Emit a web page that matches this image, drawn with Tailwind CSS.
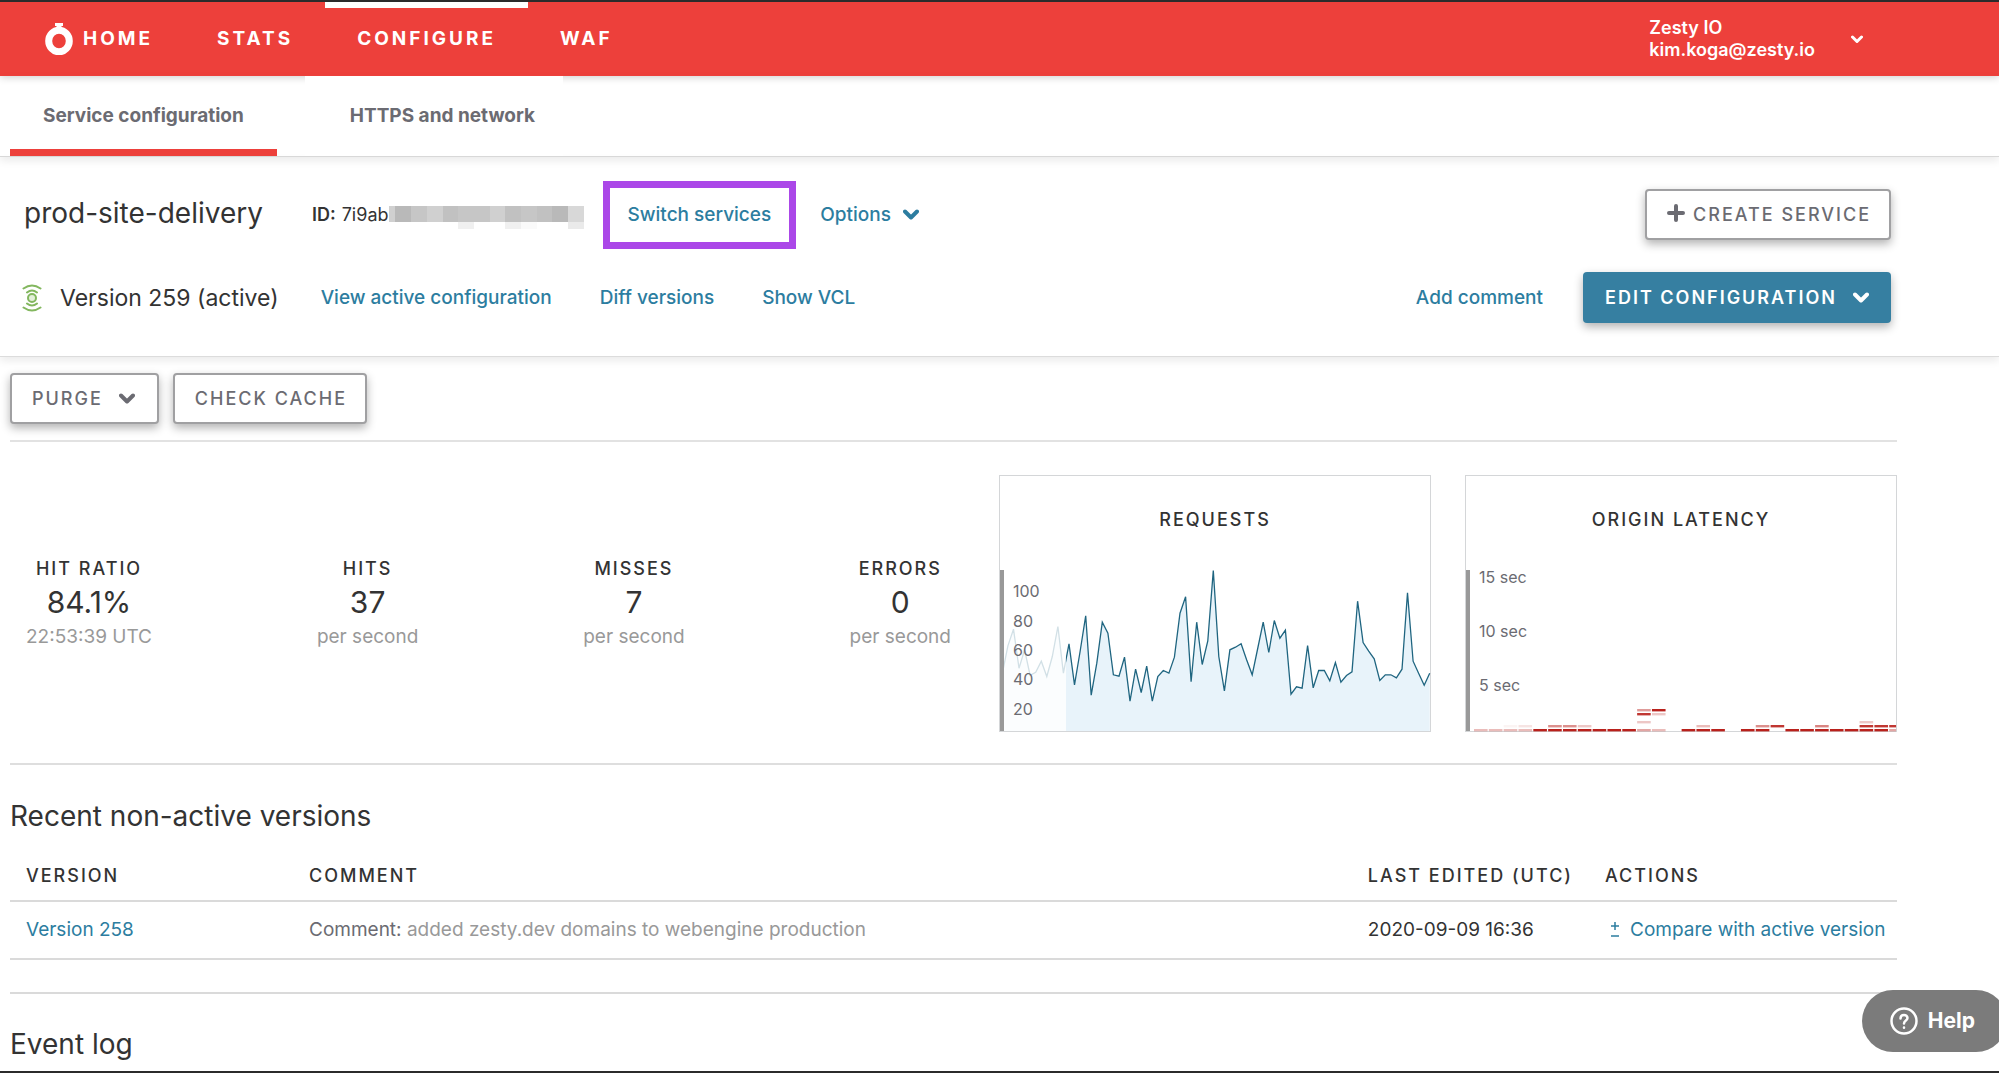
<!DOCTYPE html>
<html lang="en">
<head>
    <meta charset="UTF-8" />
    <meta name="viewport" content="width=device-width, initial-scale=1.0" />
    <title>prod-site-delivery - Configure</title>
    <script src="https://cdn.jsdelivr.net/npm/@tailwindcss/browser@4"></script>
</head>
<body class="min-h-screen bg-white border-t-2 border-b-2 border-[#2b2b2b] font-['Inter',sans-serif] text-[19px] leading-6 text-[#333] overflow-x-hidden">

<!-- Top navigation -->
<header class="relative z-10 flex h-[74px] items-stretch bg-[#ed403b] text-white shadow-[0_1px_8px_rgba(0,0,0,0.2)]">
    <nav class="flex font-bold tracking-[3px]">
        <a href="#" class="flex items-center gap-[10px] pl-[45px] pr-[32px]">
            <svg class="h-8 w-7" viewBox="0 0 28 32" fill="none">
                <path d="M10 0h8v3h-1.5v4h-5V3H10z" fill="#fff" />
                <ellipse cx="14" cy="18" rx="10.3" ry="10.8" stroke="#fff" stroke-width="7" />
            </svg>
            HOME
        </a>
        <a href="#" class="flex items-center px-8">STATS</a>
        <a href="#" class="flex items-center border-t-[6px] border-white px-8 pb-[6px]">CONFIGURE</a>
        <a href="#" class="flex items-center px-8">WAF</a>
    </nav>
    <button class="ml-auto mr-[136px] flex items-center gap-9 text-left font-semibold text-[18px] leading-[22px]">
        <span>Zesty IO<br />kim.koga@zesty.io</span>
        <svg class="h-3 w-3" viewBox="0 0 12 12" fill="none" stroke="#fff" stroke-width="3" stroke-linecap="round" stroke-linejoin="round"><path d="M1.5 4L6 8.5 10.5 4" /></svg>
    </button>
</header>

<!-- Tabs -->
<nav class="relative z-20 -mt-px flex h-[82px] border-b border-[#d8d8d8] pl-[10px] pt-px font-bold text-[#6b6b72] shadow-[0_4px_8px_rgba(0,0,0,0.08)]">
    <a href="#" class="flex items-center border-b-[7px] border-[#ed403b] px-[33px] pt-[6px]">Service configuration</a>
    <a href="#" class="ml-7 flex items-center bg-white pl-[45px] pr-7">HTTPS and network</a>
</nav>

<!-- Service header -->
<section class="flex h-[200px] flex-col gap-8 border-b border-[#dcdcdc] pl-[22px] pr-[108px] pt-8 font-medium text-[#2c7da0] shadow-[0_4px_8px_rgba(0,0,0,0.08)]">
    <div class="flex h-[51px] items-center">
        <h1 class="pb-1 pl-[2px] text-[28px] font-normal text-[#333]">prod-site-delivery</h1>
        <p class="ml-[49px] flex items-center text-[18px] font-normal text-[#333]">
            <b class="mr-[6px] font-semibold">ID:</b>7i9ab
            <svg class="h-7 w-[195px]" viewBox="0 0 195 28" shape-rendering="crispEdges">
                <path d="M0 5h6v16H0z" fill="#d0d0d0" />
                <path d="M6 5h16v16H6zM163 5h16v16h-16z" fill="#b9b9b9" />
                <path d="M22 5h16v16H22zM69 5h32v16H69zM132 5h16v16h-16z" fill="#c6c6c6" />
                <path d="M38 5h16v16H38zM101 5h15v16h-15z" fill="#d0d0d0" />
                <path d="M54 5h15v16H54zM116 5h16v16h-16zM148 5h15v16h-15z" fill="#c1c1c1" />
                <path d="M179 5h16v16h-16z" fill="#d8d8d8" />
                <path d="M69 21h16v7H69zM116 21h16v7h-16z" fill="#f0f0f0" />
                <path d="M132 21h16v7h-16z" fill="#fafafa" />
                <path d="M179 21h16v7h-16z" fill="#eaeaea" />
            </svg>
        </p>
        <a href="#" class="ml-[19px] flex h-[68px] shrink-0 items-center border-[7px] border-[#ab47e8] px-[18px]">Switch services</a>
        <button class="ml-6 flex items-center gap-3">
            Options
            <svg class="h-4 w-4" viewBox="0 0 16 16" fill="none" stroke="currentColor" stroke-width="4" stroke-linecap="round" stroke-linejoin="round"><path d="M2 4.5L8 10.5 14 4.5" /></svg>
        </button>
        <button class="ml-auto flex h-[51px] items-center gap-2 rounded-[4px] border-2 border-[#a0a0a2] bg-white pl-5 pr-[18px] text-[18px] tracking-[2px] text-[#6b6b72] shadow-[0_4px_10px_rgba(0,0,0,0.3)]">
            <svg class="h-[18px] w-[18px] -mt-1" viewBox="0 0 18 18" stroke="currentColor" stroke-width="4" stroke-linecap="round"><path d="M9 2v14M2 9h14" /></svg>
            CREATE SERVICE
        </button>
    </div>
    <div class="flex h-[51px] items-center">
        <svg class="h-7 w-5" viewBox="0 0 20 28" fill="none" stroke="#83b75f" stroke-width="2" stroke-linecap="round">
            <circle cx="10" cy="14" r="4" fill="#e3efdb" />
            <path d="M5 8.5Q10 4.5 15 8.5M1.5 4.5Q10-1.5 18.5 4.5M5 19.5Q10 23.5 15 19.5M1.5 23.5Q10 29.5 18.5 23.5" />
        </svg>
        <h2 class="ml-[18px] text-[23px] font-normal text-[#333]">Version 259 (active)</h2>
        <a href="#" class="ml-[42px]">View active configuration</a>
        <a href="#" class="ml-12">Diff versions</a>
        <a href="#" class="ml-12">Show VCL</a>
        <a href="#" class="ml-auto">Add comment</a>
        <button class="ml-10 flex h-[51px] items-center gap-4 rounded-[4px] bg-[#367fa1] px-[22px] text-[18px] font-semibold tracking-[2px] text-white shadow-[0_4px_10px_rgba(0,0,0,0.3)]">
            EDIT CONFIGURATION
            <svg class="h-4 w-4" viewBox="0 0 16 16" fill="none" stroke="currentColor" stroke-width="4" stroke-linecap="round" stroke-linejoin="round"><path d="M2 4.5L8 10.5 14 4.5" /></svg>
        </button>
    </div>
</section>

<main class="pl-[10px] pr-[102px] pt-4">
    <div class="flex gap-[14px] border-b-2 border-[#e2e2e2] pb-4 text-[18px] font-medium tracking-[2px] text-[#6b6b72]">
        <button class="flex h-[51px] items-center gap-4 rounded-[4px] border-2 border-[#a0a0a2] bg-white pl-5 pr-[22px] shadow-[0_4px_10px_rgba(0,0,0,0.3)]">
            PURGE
            <svg class="h-4 w-4" viewBox="0 0 16 16" fill="none" stroke="currentColor" stroke-width="4" stroke-linecap="round" stroke-linejoin="round"><path d="M2 4.5L8 10.5 14 4.5" /></svg>
        </button>
        <button class="flex h-[51px] items-center rounded-[4px] border-2 border-[#a0a0a2] bg-white pl-5 pr-[18px] shadow-[0_4px_10px_rgba(0,0,0,0.3)]">CHECK CACHE</button>
    </div>

    <!-- Live stats -->
    <section class="flex border-b-2 border-[#dedede] pb-[31px] pt-[33px]">
        <div class="flex grow items-center justify-between pl-4 pr-12 text-center">
            <div>
                <h3 class="text-[18px] font-medium tracking-[2px]">HIT RATIO</h3>
                <p class="text-[30px] leading-[42px]">84.1%</p>
                <p class="leading-7 text-[#999]">22:53:39 UTC</p>
            </div>
            <div>
                <h3 class="text-[18px] font-medium tracking-[2px]">HITS</h3>
                <p class="text-[30px] leading-[42px]">37</p>
                <p class="leading-7 text-[#999]">per second</p>
            </div>
            <div>
                <h3 class="text-[18px] font-medium tracking-[2px]">MISSES</h3>
                <p class="text-[30px] leading-[42px]">7</p>
                <p class="leading-7 text-[#999]">per second</p>
            </div>
            <div>
                <h3 class="text-[18px] font-medium tracking-[2px]">ERRORS</h3>
                <p class="text-[30px] leading-[42px]">0</p>
                <p class="leading-7 text-[#999]">per second</p>
            </div>
        </div>
        <div class="flex shrink-0 gap-[34px]">
            <div class="flex h-[257px] w-[432px] flex-col justify-between border border-[#d4d6d8]">
                <h3 class="pt-8 text-center text-[18px] font-medium tracking-[2px]">REQUESTS</h3>
                <svg class="h-[161px] w-full overflow-visible text-[16px]" viewBox="0 0 430 161">
                    <path id="requestsArea" fill="#e8f3fa" />
                    <path id="requestsLine" fill="none" stroke="#1f6580" stroke-width="1.3" />
                    <path d="M4 0h62v161H4z" fill="#fff" fill-opacity="0.8" />
                    <path d="M0 0h4v161H0z" fill="#999" />
                    <g fill="#6b6b72">
                        <text x="13" y="27">100</text>
                        <text x="13" y="57">80</text>
                        <text x="13" y="86">60</text>
                        <text x="13" y="115">40</text>
                        <text x="13" y="145">20</text>
                    </g>
                </svg>
            </div>
            <div class="flex h-[257px] w-[432px] flex-col justify-between border border-[#d4d6d8]">
                <h3 class="pt-8 text-center text-[18px] font-medium tracking-[2px]">ORIGIN LATENCY</h3>
                <svg class="h-[161px] w-full overflow-visible text-[16px]" viewBox="0 0 430 161">
                    <path d="M0 0h4v161H0z" fill="#999" />
                    <g id="latencyCells" fill="#b9211c"></g>
                    <g fill="#6b6b72">
                        <text x="13" y="13">15 sec</text>
                        <text x="13" y="67">10 sec</text>
                        <text x="13" y="121">5 sec</text>
                    </g>
                </svg>
            </div>
        </div>
    </section>

    <!-- Versions -->
    <section class="border-b-2 border-[#dadada] pb-8">
        <h2 class="pb-[31px] pt-[34px] text-[28px] leading-[34px]">Recent non-active versions</h2>
        <table class="w-full text-left">
            <thead>
                <tr class="border-b-2 border-[#dadada] text-[18px] tracking-[2px]">
                    <th class="w-[283px] px-4 pb-3 font-medium">VERSION</th>
                    <th class="px-4 pb-3 font-medium">COMMENT</th>
                    <th class="w-[236px] whitespace-nowrap px-4 pb-3 font-medium">LAST EDITED (UTC)</th>
                    <th class="w-[308px] px-4 pb-3 font-medium">ACTIONS</th>
                </tr>
            </thead>
            <tbody>
                <tr class="border-b-2 border-[#dadada]">
                    <td class="px-4 py-4"><a href="#" class="text-[#2c7da0]">Version 258</a></td>
                    <td class="px-4 py-4 text-[#999]"><span class="text-[#6b6b72]">Comment:</span> added zesty.dev domains to webengine production</td>
                    <td class="px-4 py-4">2020-09-09 16:36</td>
                    <td class="whitespace-nowrap py-4 pl-[21px]">
                        <a href="#" class="flex items-center gap-[10px] text-[#2c7da0]">
                            <svg class="h-[18px] w-[10px]" viewBox="0 0 10 18" stroke="currentColor" stroke-width="1.5"><path d="M5 1v8M1 5h8M1 15h8" /></svg>
                            Compare with active version
                        </a>
                    </td>
                </tr>
            </tbody>
        </table>
    </section>

    <h2 class="pt-[33px] text-[28px] leading-[34px]">Event log</h2>
</main>

<button class="fixed -right-2 bottom-[21px] z-30 flex h-[62px] items-center gap-[10px] rounded-full bg-[#7b7b7b] pl-7 pr-8 text-[21px] font-bold text-white">
    <svg class="h-7 w-7" viewBox="0 0 28 28" fill="none" stroke="#fff" stroke-width="2.5" stroke-linecap="round">
        <circle cx="14" cy="14" r="12.5" />
        <path d="M10.5 11.5c0-5 7-4.5 7-.5 0 2.5-3.5 2.5-3.5 5.5M14 20.5v.2" />
    </svg>
    Help
</button>

<script>
    const requests = [
      308, 226, 176, 293, 238, 314, 305, 272, 318, 258, 168, 308, 220, 343, 243, 136, 374, 278, 155, 188,
      313, 317, 260, 392, 296, 366, 287, 392, 318, 300, 308, 260, 128, 79, 334, 155, 282, 211, 0, 258,
      361, 238, 230, 220, 268, 313, 234, 155, 246, 150, 203, 179, 371, 349, 353, 225, 352, 300, 300, 331,
      276, 335, 315, 304, 92, 216, 242, 265, 330, 313, 313, 322, 296, 67, 272, 308, 344, 308
    ];
    const line = requests.map((v, i) => `${(2.4 + i * 5.55).toFixed(1)} ${(v / 3 + 0.5).toFixed(1)}`).join('L');
    document.getElementById('requestsLine').setAttribute('d', `M${line}`);
    document.getElementById('requestsArea').setAttribute('d', `M2.4 161L${line}V161Z`);

    // column, row from the bottom, intensity
    const latency = [
      [0, 0, .3], [1, 0, .3], [2, 0, .3], [2, 1, .05], [3, 0, .3], [3, 1, .12], [4, 0, 1], [5, 0, 1], [5, 1, .5],
      [6, 0, 1], [6, 1, .5], [7, 0, 1], [7, 1, .25], [8, 0, 1], [9, 0, 1], [10, 0, 1], [11, 0, .4], [11, 2, .25],
      [11, 4, .9], [11, 5, .45], [12, 0, .3], [12, 4, .25], [12, 5, 1], [14, 0, 1], [15, 0, 1], [15, 1, .3],
      [16, 0, 1], [18, 0, 1], [19, 0, 1], [19, 1, .5], [20, 1, .9], [21, 0, 1], [22, 0, 1],
      [23, 1, .55], [24, 0, 1], [25, 0, 1], [26, 0, 1], [26, 1, .9], [26, 2, .25], [27, 0, 1], [27, 1, .9],
      [28, 0, .4], [28, 1, .9], [23, 0, 1]
    ];
    document.getElementById('latencyCells').innerHTML = latency.map(([col, row, level]) =>
      `<rect x="${8 + col * 14.83}" y="${159 - row * 4}" width="${col === 28 ? 6.8 : 13.6}" height="2.4" fill-opacity="${level}" />`).join('');
</script>
</body>
</html>
